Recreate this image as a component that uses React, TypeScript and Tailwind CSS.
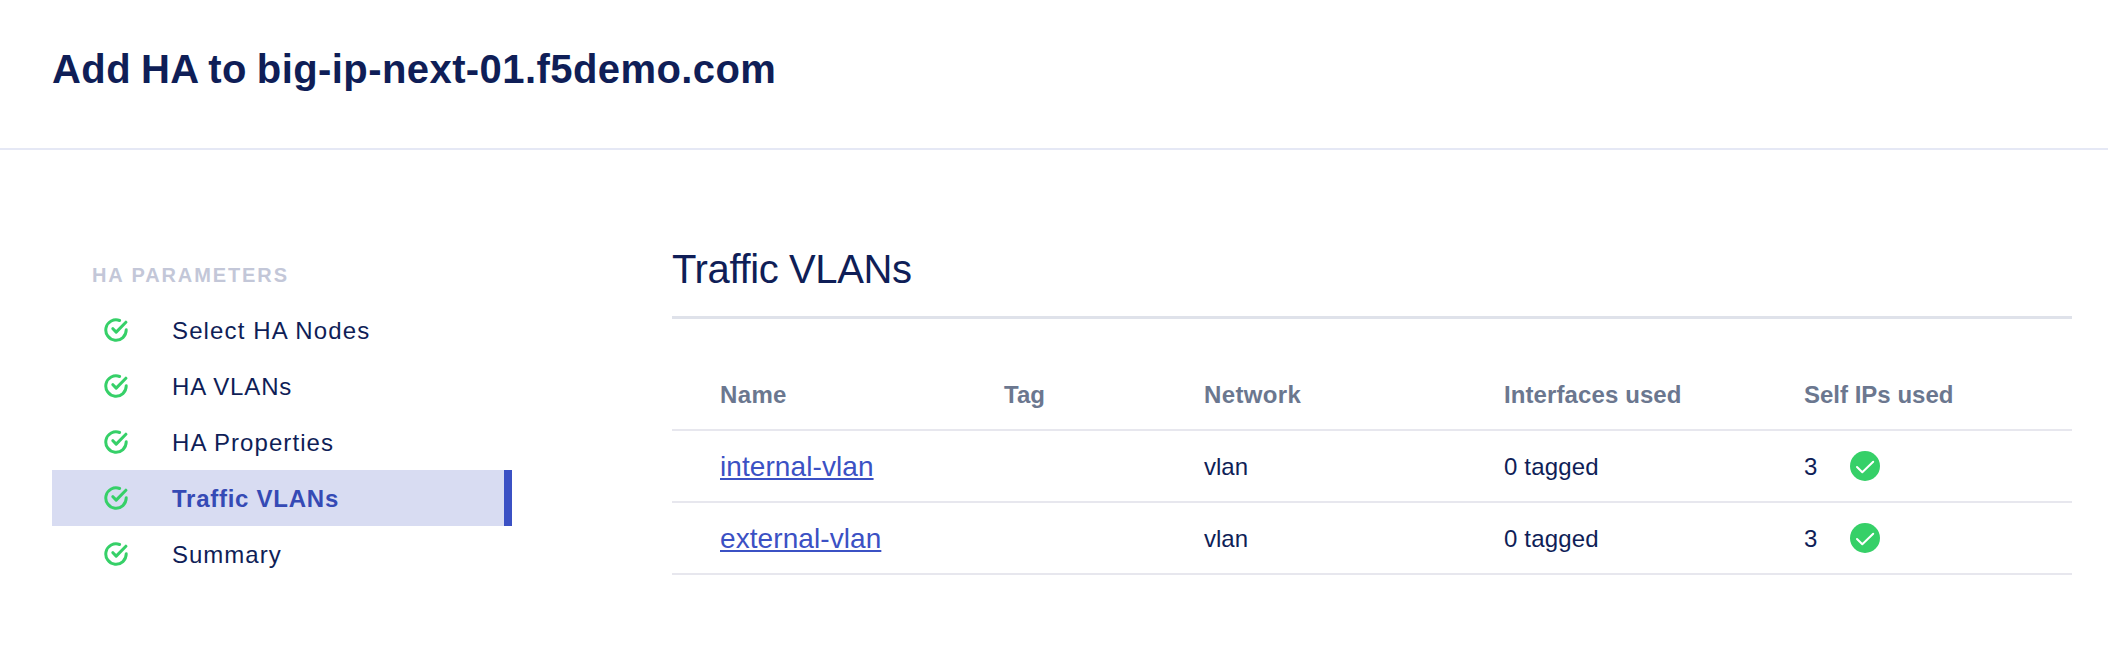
const steps = [
  { label: "Select HA Nodes", spacing: "tracking-[1.13px]" },
  { label: "HA VLANs", spacing: "tracking-[0.85px]" },
  { label: "HA Properties", spacing: "tracking-[1.08px]" },
  { label: "Traffic VLANs", spacing: "tracking-[0.74px]", active: true },
  { label: "Summary", spacing: "tracking-[1px]" },
];

const vlans = [
  { name: "internal-vlan", tag: "", network: "vlan", interfaces: "0 tagged", selfIps: 3 },
  { name: "external-vlan", tag: "", network: "vlan", interfaces: "0 tagged", selfIps: 3 },
];

const columns = "grid grid-cols-[284px_200px_300px_300px_268px] border-b-2 border-[#e7e7ee] pl-12";

function StepIcon() {
  return (
    <svg className="h-6 w-6 shrink-0" viewBox="0 0 24 24" fill="none" stroke="#36d068" strokeWidth="3" strokeLinecap="round" strokeLinejoin="round">
      <path d="M15.6 2.5A10.2 10.2 0 1 0 22.2 11.8" />
      <path d="M8.9 10.7l3.3 3.4L21.9 4.2" />
    </svg>
  );
}

function OkIcon() {
  return (
    <svg className="h-[30px] w-[30px]" viewBox="0 0 30 30" fill="none">
      <circle cx="15" cy="15" r="15" fill="#36d068" />
      <path d="M7 16l5.3 5.3L23.2 10.8" stroke="#fff" strokeWidth="2" strokeLinecap="round" strokeLinejoin="round" />
    </svg>
  );
}

export default function App() {
  return (
    <div className="h-[662px] w-[2108px] bg-white font-['Liberation_Sans',sans-serif] text-[#0f1e57]">
      <header className="h-[150px] border-b-2 border-[#e5e8f5] pt-[45px] pl-[52px]">
        <h1 className="text-[40px] leading-[48px] font-bold tracking-[0.42px] [word-spacing:-1.5px]">Add HA to big-ip-next-01.f5demo.com</h1>
      </header>
      <div className="flex">
        <nav className="ml-[52px] w-[460px] pt-[110px]">
          <h2 className="h-[42px] pt-px pl-10 text-xl leading-[28px] font-bold tracking-[1.9px] text-[#c3c7d8]">HA PARAMETERS</h2>
          <ul>
            {steps.map((step) => (
              <li
                key={step.label}
                className={`flex h-14 items-center border-r-8 pl-[52px] text-2xl ${step.spacing} ${
                  step.active ? "border-[#3b51c4] bg-[#d8dcf2] font-bold text-[#354ab5]" : "border-transparent"
                }`}
              >
                <StepIcon />
                <span className="pt-0.5 pl-11">{step.label}</span>
              </li>
            ))}
          </ul>
        </nav>
        <main className="ml-40 w-[1400px] pt-[95px]">
          <h2 className="h-[74px] border-b-3 border-[#dfe2ea] text-[40px] leading-[48px] tracking-[-0.37px]">Traffic VLANs</h2>
          <div className={`${columns} h-[112px] pt-[58px] text-2xl leading-[36px] font-bold text-[#6b778f]`}>
            <span className="tracking-[0.35px]">Name</span>
            <span>Tag</span>
            <span className="tracking-[0.35px]">Network</span>
            <span className="tracking-[0.1px]">Interfaces used</span>
            <span>Self IPs used</span>
          </div>
          {vlans.map((vlan) => (
            <div key={vlan.name} className={`${columns} h-[72px] items-center text-2xl`}>
              <a className="justify-self-start pt-0.5 text-[28px] tracking-[0.08px] text-[#3b51c4] underline decoration-2 underline-offset-2">{vlan.name}</a>
              <span>{vlan.tag}</span>
              <span className="pt-0.5">{vlan.network}</span>
              <span className="pt-0.5 tracking-[0.17px]">{vlan.interfaces}</span>
              <span className="flex items-center">
                <span className="w-[46px] pt-0.5">{vlan.selfIps}</span>
                <OkIcon />
              </span>
            </div>
          ))}
        </main>
      </div>
    </div>
  );
}
